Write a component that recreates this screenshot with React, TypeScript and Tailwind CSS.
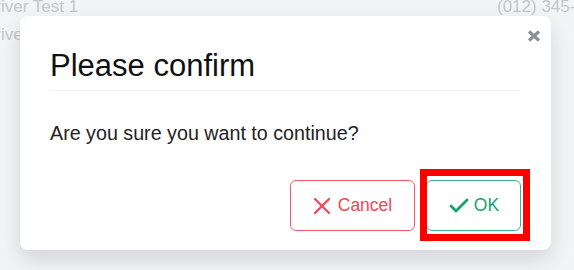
import { X, Check } from "lucide-react";

const rows = [
  { name: "Driver Test 1", phone: "(012) 345-6789" },
  { name: "Driver Test 2", phone: "" },
];

const App = () => {
  return (
    <main className="relative h-[270px] w-[574px] overflow-hidden bg-[#f3f4f6] font-['Liberation_Sans',Arial,sans-serif]">
      {/* list behind the modal */}
      <div className="flex flex-col text-[17px] leading-[28px] text-[#c5c7cc]">
        {rows.map((row) => (
          <div key={row.name} className="-mt-[6px] mb-[6px] flex justify-between first:-mt-[7px]">
            <span className="-ml-[17px]">{row.name}</span>
            {row.phone && (
              <span className="ml-auto w-[77px] overflow-hidden whitespace-nowrap">{row.phone}</span>
            )}
          </div>
        ))}
      </div>

      {/* modal */}
      <div className="absolute inset-0 pl-[20px] pt-[16px]">
        <div className="relative flex h-[234px] w-[531px] flex-col rounded-[8px] bg-white px-[30px] pt-[31px] shadow-[0_10px_22px_rgba(0,0,0,0.13)]">
          <button className="absolute right-[10px] top-[13px] flex h-[14px] w-[15px] items-center justify-center">
            <svg width="14" height="12" viewBox="0 0 14 12">
              <path d="M2 1.5 L12 10.5 M12 1.5 L2 10.5" stroke="#8a8f99" strokeWidth="3.2" />
            </svg>
          </button>

          <h2 className="border-b border-[#efefef] pb-[6px] text-[31px] leading-[37px] text-[#111111]">
            Please confirm
          </h2>

          <p className="mt-[28px] text-[19.7px] leading-[28px] text-[#222222]">
            Are you sure you want to continue?
          </p>

          <div className="mt-[33px] flex justify-end gap-[11px]">
            <button className="flex h-[51px] w-[125px] items-center justify-center gap-[7px] rounded-[6px] border border-[#f25a6b] text-[17.5px] text-[#f0475b]">
              <X size={28} strokeWidth={1.9} className="-m-[5px]" />
              Cancel
            </button>
            <button className="flex h-[51px] w-[95px] items-center justify-center gap-[4px] rounded-[6px] border border-[#3bb08a] text-[17.5px] text-[#1a9f76]">
              <Check size={24} strokeWidth={2.8} className="-mx-[1px]" />
              OK
            </button>
          </div>
        </div>
      </div>

      {/* highlight annotation */}
      <div className="absolute left-[420px] top-[169px] h-[72px] w-[110px] border-[7px] border-[#ff0000]" />
    </main>
  );
};

export default App;
